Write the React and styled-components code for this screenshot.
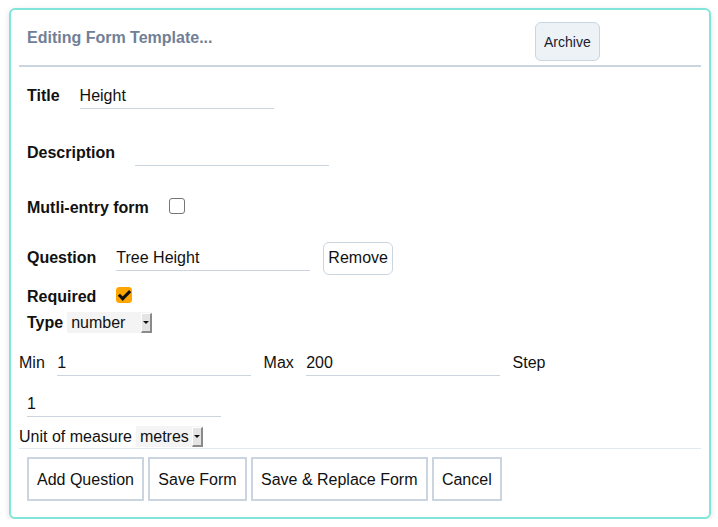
import React from "react";
import styled, { createGlobalStyle } from "styled-components";

const GlobalStyle = createGlobalStyle`
    body {
        margin: 0;
        background: #fff;
        font-family: "Liberation Sans", Arial, sans-serif;
        font-size: 16px;
        color: #111;
    }
`;

const Card = styled.div`
    box-sizing: border-box;
    width: 702px;
    height: 511px;
    margin: 8px 0 0 9px;
    padding: 0 8px;
    border: 2px solid #81e6d9;
    border-radius: 6px;
    background: #fff;
    box-shadow: 0 2px 6px rgba(0, 0, 0, 0.12);
`;

const Header = styled.div`
    display: grid;
    grid-template-columns: 508px auto;
    align-items: start;
    padding: 12px 0 4px 8px;
    border-bottom: 2px solid #cbd5e0;
`;

const Heading = styled.div`
    padding-top: 7px;
    font-weight: bold;
    color: #718096;
`;

const ArchiveButton = styled.button`
    justify-self: start;
    height: 39px;
    padding: 0 8px;
    font-family: inherit;
    font-size: 14px;
    color: #1a202c;
    background: #edf2f7;
    border: 1px solid #cbd5e0;
    border-radius: 6px;
`;

const Row = styled.div`
    display: flex;
    align-items: center;
    flex-wrap: ${(p) => (p.$wrap ? "wrap" : "nowrap")};
    column-gap: ${(p) => p.$gap || 0}px;
    row-gap: 15px;
    height: ${(p) => (p.$height ? p.$height + "px" : "auto")};
    margin-top: ${(p) => p.$top}px;
    padding-left: ${(p) => (p.$indent ? 8 : 0)}px;
`;

const Label = styled.span`
    font-weight: ${(p) => (p.$bold ? "bold" : "normal")};
    white-space: nowrap;
`;

const TextInput = styled.input`
    box-sizing: border-box;
    width: 194px;
    height: 26px;
    margin: 0 ${(p) => (p.$spaced ? 8 : 0)}px;
    padding: 1px 0 0;
    border: none;
    border-bottom: 1px solid #cbd5e0;
    font-family: inherit;
    font-size: 16px;
    color: #111;
    background: transparent;
    outline: none;
`;

const Check = styled.input.attrs({ type: "checkbox" })`
    appearance: none;
    position: relative;
    box-sizing: border-box;
    width: 16px;
    height: 16px;
    margin: 0 0 4px 0;
    border: 1px solid #767676;
    border-radius: 3px;
    background: #fff;
    &:checked {
        border-color: #ffa500;
        background: #ffa500;
    }
    &:checked::after {
        content: "";
        position: absolute;
        left: 4px;
        top: 0px;
        width: 4px;
        height: 9px;
        border-right: 3px solid #111;
        border-bottom: 3px solid #111;
        transform: rotate(45deg);
    }
`;

const RemoveButton = styled.button`
    height: 33px;
    margin-left: -7px;
    padding: 0 4px;
    font-family: inherit;
    font-size: 16px;
    color: #111;
    background: #fff;
    border: 1px solid #cbd5e0;
    border-radius: 6px;
`;

const SelectWrap = styled.span`
    position: relative;
    display: inline-flex;
    height: 21px;
`;

const Select = styled.select`
    appearance: none;
    width: ${(p) => p.$width}px;
    height: 21px;
    padding: 0 12px 0 4px;
    border: none;
    border-radius: 0;
    font-family: inherit;
    font-size: 16px;
    color: #111;
    background: #f4f4f4;
`;

const Arrow = styled.span`
    position: absolute;
    top: 1px;
    right: 0;
    bottom: 0;
    width: 8px;
    background: #e4e4e4;
    border-top: 1px solid #fff;
    border-left: 1px solid #fff;
    border-right: 2px solid #8a8a8a;
    border-bottom: 2px solid #8a8a8a;
    pointer-events: none;
    &::after {
        content: "";
        position: absolute;
        left: 1px;
        top: 7px;
        border-left: 3px solid transparent;
        border-right: 3px solid transparent;
        border-top: 3px solid #111;
    }
`;

const Divider = styled.div`
    height: 1px;
    margin-top: 1px;
    background: #e2e8f0;
`;

const ActionButton = styled.button`
    height: 44px;
    padding: 1px 8px 0;
    font-family: inherit;
    font-size: 16px;
    color: #111;
    background: #fff;
    border: 2px solid #cbd5e0;
    border-radius: 0;
`;

const Dropdown = ({ value, width }) => (
    <SelectWrap>
        <Select $width={width} defaultValue={value}>
            <option>{value}</option>
        </Select>
        <Arrow />
    </SelectWrap>
);

const App = () => {
    return (
        <>
            <GlobalStyle />
            <Card>
                <Header>
                    <Heading>Editing Form Template...</Heading>
                    <ArchiveButton>Archive</ArchiveButton>
                </Header>

                <Row $indent $gap={20} $height={26} $top={16}>
                    <Label $bold>Title</Label>
                    <TextInput defaultValue="Height" />
                </Row>

                <Row $indent $gap={20} $height={26} $top={31}>
                    <Label $bold>Description</Label>
                    <TextInput defaultValue="" />
                </Row>

                <Row $indent $gap={20} $height={26} $top={29}>
                    <Label $bold>Mutli-entry form</Label>
                    <Check />
                </Row>

                <Row $indent $gap={20} $height={34} $top={20}>
                    <Label $bold>Question</Label>
                    <TextInput defaultValue="Tree Height" />
                    <RemoveButton>Remove</RemoveButton>
                </Row>

                <Row $indent $gap={20} $height={26} $top={9}>
                    <Label $bold>Required</Label>
                    <Check defaultChecked />
                </Row>

                <Row $indent $gap={4} $height={21} $top={2}>
                    <Label $bold>Type</Label>
                    <Dropdown value="number" width={85} />
                </Row>

                <Row $wrap $gap={4.4} $top={17}>
                    <Label>Min</Label>
                    <TextInput $spaced defaultValue="1" />
                    <Label>Max</Label>
                    <TextInput $spaced defaultValue="200" />
                    <Label>Step</Label>
                    <TextInput $spaced defaultValue="1" />
                </Row>

                <Row $gap={4} $height={21} $top={9}>
                    <Label>Unit of measure</Label>
                    <Dropdown value="metres" width={67} />
                </Row>

                <Divider />

                <Row $indent $gap={4.4} $height={44} $top={8}>
                    <ActionButton>Add Question</ActionButton>
                    <ActionButton>Save Form</ActionButton>
                    <ActionButton>Save &amp; Replace Form</ActionButton>
                    <ActionButton>Cancel</ActionButton>
                </Row>
            </Card>
        </>
    );
};

export default App;
